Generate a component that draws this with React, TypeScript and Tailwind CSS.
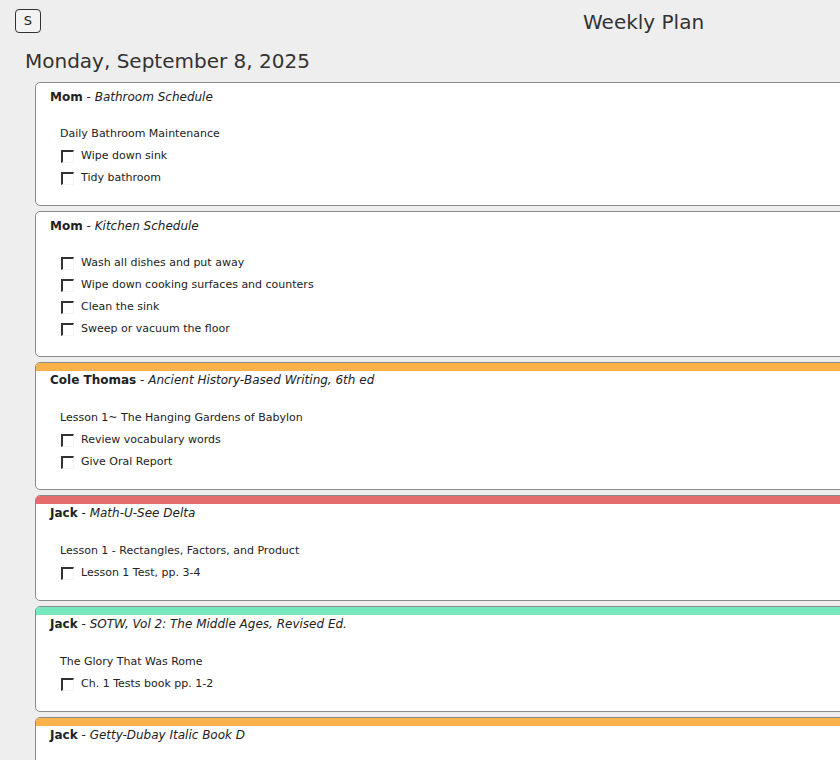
import React from "react";

type Card = {
  who: string;
  title: string;
  bar?: string;
  sub?: string;
  items: string[];
};

const cards: Card[] = [
  { who: "Mom", title: "Bathroom Schedule", sub: "Daily Bathroom Maintenance", items: ["Wipe down sink", "Tidy bathroom"] },
  { who: "Mom", title: "Kitchen Schedule", items: ["Wash all dishes and put away", "Wipe down cooking surfaces and counters", "Clean the sink", "Sweep or vacuum the floor"] },
  { who: "Cole Thomas", title: "Ancient History-Based Writing, 6th ed", bar: "#fbb24a", sub: "Lesson 1~ The Hanging Gardens of Babylon", items: ["Review vocabulary words", "Give Oral Report"] },
  { who: "Jack", title: "Math-U-See Delta", bar: "#e56c6c", sub: "Lesson 1 - Rectangles, Factors, and Product", items: ["Lesson 1 Test, pp. 3-4"] },
  { who: "Jack", title: "SOTW, Vol 2: The Middle Ages, Revised Ed.", bar: "#78e8bf", sub: "The Glory That Was Rome", items: ["Ch. 1 Tests book pp. 1-2"] },
  { who: "Jack", title: "Getty-Dubay Italic Book D", bar: "#fbb24a", items: [] },
];

function Check() {
  return <span className="block ml-[1px] w-[13px] h-[13px] border-t-2 border-l-2 border-r border-b border-t-[#333] border-l-[#333] border-r-[#f4f4f4] border-b-[#f4f4f4] bg-white mr-[7px] shrink-0" />;
}

function CardView({ c }: { c: Card }) {
  const bodyClass = c.items.length === 0
    ? "h-[80px]"
    : c.bar
    ? "pl-[24px] pt-[19px] pb-[16px] text-[11px] text-[#222]"
    : "pl-[24px] pt-[18px] pb-[16px] text-[11px] text-[#222]";
  return (
    <div className="w-[1200px] ml-[35px] mb-[5px] bg-white border border-[#8a8a8a] rounded-[5px] overflow-hidden">
      {c.bar ? (
        <div className="h-[8px] mb-[1px]" style={{ backgroundColor: c.bar }} />
      ) : (
        <div className="h-[6px]" />
      )}
      <div className="pl-[14px] text-[12px] leading-[16px] text-[#222]">
        <span className="font-bold">{c.who}</span>
        <span> - </span>
        <span className="italic">{c.title}</span>
      </div>
      <div className={bodyClass}>
        {c.sub && <div className="leading-[22px] h-[22px]">{c.sub}</div>}
        {c.items.map((it, i) => (
          <div key={i} className="flex items-center h-[22px] leading-[22px]">
            <Check />
            <span>{it}</span>
          </div>
        ))}
      </div>
    </div>
  );
}

export default function App() {
  return (
    <div className="w-[840px] h-[760px] overflow-hidden bg-[#eeeeee] text-[#333]" style={{ fontFamily: '"DejaVu Sans", Verdana, sans-serif' }}>
      <div className="relative h-[44px]">
        <button className="absolute left-[15px] top-[9px] w-[26px] h-[24px] rounded-[4px] border border-[#333] bg-[#f3f3f3] text-[13px] leading-[22px] text-[#222]">S</button>
        <div className="absolute left-[583px] top-[9px] text-[20px] leading-[26px] text-[#333]">Weekly Plan</div>
      </div>
      <div className="pl-[25px] text-[20px] leading-[34px] h-[38px] text-[#333]">Monday, September 8, 2025</div>
      {cards.map((c, i) => (
        <CardView key={i} c={c} />
      ))}
    </div>
  );
}
